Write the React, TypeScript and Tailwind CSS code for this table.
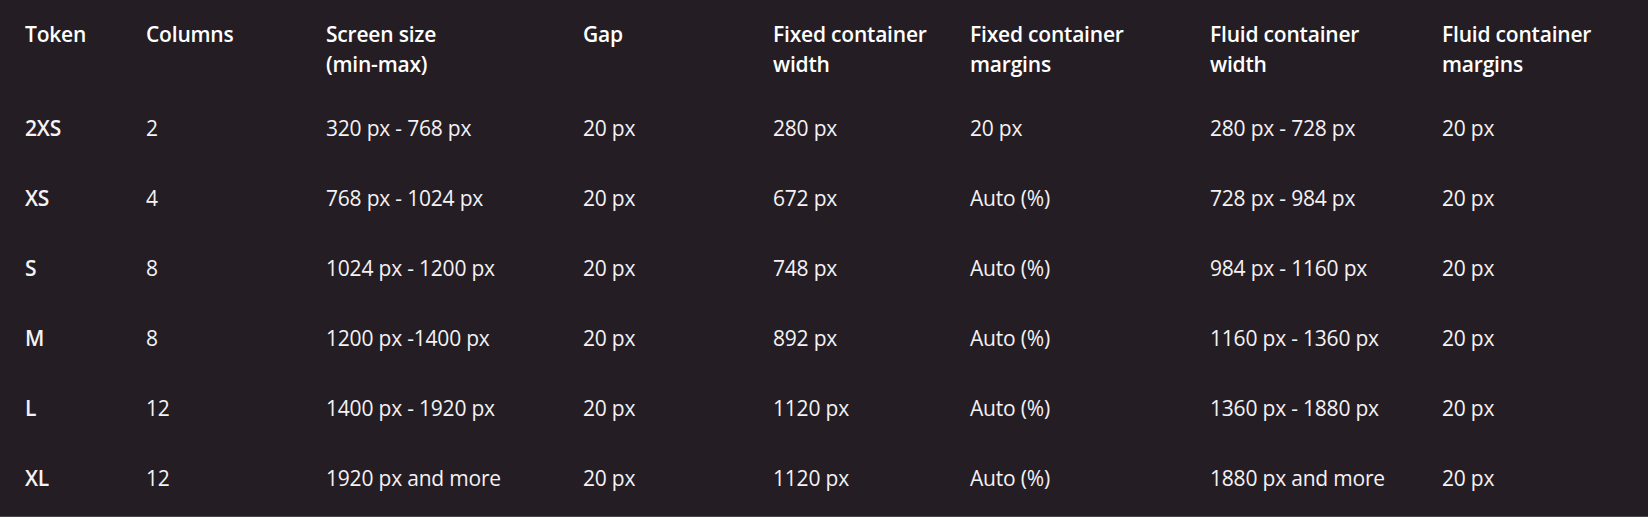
const headers = [
    ["Token"],
    ["Columns"],
    ["Screen size", "(min-max)"],
    ["Gap"],
    ["Fixed container", "width"],
    ["Fixed container", "margins"],
    ["Fluid container", "width"],
    ["Fluid container", "margins"],
];

const rows = [
    ["2XS", "2", "320 px - 768 px", "20 px", "280 px", "20 px", "280 px - 728 px", "20 px"],
    ["XS", "4", "768 px - 1024 px", "20 px", "672 px", "Auto (%)", "728 px - 984 px", "20 px"],
    ["S", "8", "1024 px - 1200 px", "20 px", "748 px", "Auto (%)", "984 px - 1160 px", "20 px"],
    ["M", "8", "1200 px -1400 px", "20 px", "892 px", "Auto (%)", "1160 px - 1360 px", "20 px"],
    ["L", "12", "1400 px - 1920 px", "20 px", "1120 px", "Auto (%)", "1360 px - 1880 px", "20 px"],
    ["XL", "12", "1920 px and more", "20 px", "1120 px", "Auto (%)", "1880 px and more", "20 px"],
];

const gridCols = "grid grid-cols-[121px_180px_257px_190px_197px_240px_232px_1fr]";

function App() {
    return (
        <div
            className="w-full h-[517px] bg-[#241d24] px-[25px] pb-[3px] border-b border-[#4a464a] overflow-hidden"
            style={{ fontFamily: '"Open Sans", "Noto Sans", sans-serif' }}
        >
            <div className={`${gridCols} pt-[19px] pb-[14px]`}>
                {headers.map((lines, i) => (
                    <div key={i} className="text-[21px] leading-[30px] font-semibold tracking-[-0.2px] text-white">
                        {lines.map((l, j) => (
                            <div key={j}>{l}</div>
                        ))}
                    </div>
                ))}
            </div>

            {rows.map((row, i) => (
                <div key={i} className={`${gridCols} h-[70px] items-center`}>
                    {row.map((cell, j) => (
                        <div
                            key={j}
                            className={`text-[21px] leading-[30px] tracking-[-0.2px] text-[#f4f2f4] ${
                                j === 0 ? "font-semibold" : "font-normal"
                            }`}
                        >
                            {cell}
                        </div>
                    ))}
                </div>
            ))}
        </div>
    );
}

export default App;
